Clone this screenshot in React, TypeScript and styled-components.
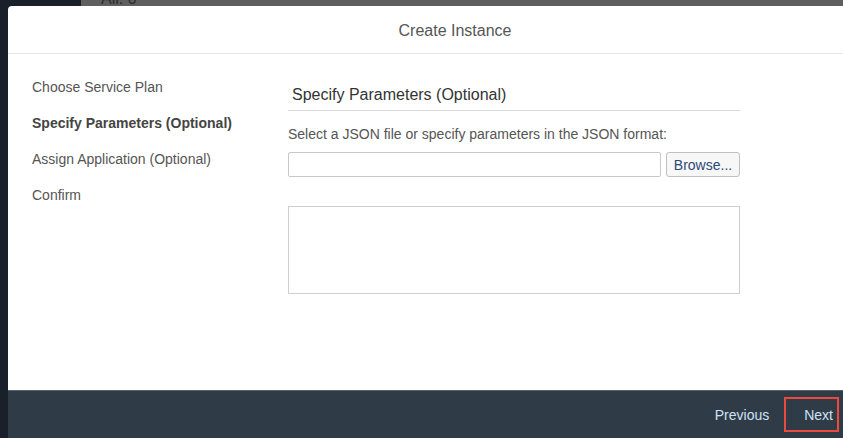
import styled, { createGlobalStyle } from 'styled-components';

const GlobalStyle = createGlobalStyle`
    html, body {
        margin: 0;
        padding: 0;
        overflow: hidden;
    }
    body {
        font-family: 'Liberation Sans', Arial, sans-serif;
    }
`;

const Page = styled.div`
    position: relative;
    width: 843px;
    height: 438px;
    overflow: hidden;
    display: flex;
    background: #5f5f5f;
`;
const SideStrip = styled.div`
    width: 81px;
    flex-shrink: 0;
    background: #1a2029;
`;
const Backdrop = styled.div`
    flex: 1;
    padding-left: 20px;
`;
const Count = styled.div`
    margin-top: -9px;
    font-size: 16px;
    line-height: 16px;
    color: #2b2b2b;
`;

const Dialog = styled.div`
    position: absolute;
    top: 6px;
    left: 8px;
    width: 894px;
    bottom: 0;
    background: #fff;
    border-radius: 4px 4px 0 0;
    display: flex;
    flex-direction: column;
`;
const Header = styled.div`
    height: 48px;
    box-sizing: border-box;
    padding-top: 3px;
    border-bottom: 1px solid #e5e5e5;
    display: flex;
    align-items: center;
    justify-content: center;
    font-size: 16px;
    color: #555;
`;
const Body = styled.div`
    flex: 1;
    display: flex;
    padding: 25px 0 0 24px;
`;
const Steps = styled.ul`
    list-style: none;
    margin: 0;
    padding: 0;
    width: 256px;
    display: flex;
    flex-direction: column;
    gap: 20px;
`;
const Step = styled.li<{ $active?: boolean }>`
    font-size: 14px;
    line-height: 16px;
    color: ${(p) => (p.$active ? '#444' : '#555')};
    font-weight: ${(p) => (p.$active ? 'bold' : 'normal')};
`;
const Panel = styled.div`
    width: 452px;
    display: flex;
    flex-direction: column;
`;
const PanelTitle = styled.h3`
    margin: 0;
    padding: 6px 4px 5px;
    font-size: 16px;
    line-height: 20px;
    font-weight: normal;
    color: #333;
    border-bottom: 1px solid #d9d9d9;
`;
const Label = styled.label`
    margin-top: 15px;
    font-size: 14px;
    line-height: 16px;
    color: #555;
`;
const FileRow = styled.div`
    display: flex;
    gap: 5px;
    margin-top: 10px;
`;
const FileInput = styled.input`
    flex: 1;
    height: 25px;
    box-sizing: border-box;
    border: 1px solid #c8c8c8;
    border-radius: 2px;
    font-family: inherit;
`;
const BrowseBtn = styled.button`
    width: 74px;
    height: 25px;
    box-sizing: border-box;
    border: 1px solid #c0c0c0;
    border-radius: 3px;
    background: #f7f7f7;
    color: #2b4a78;
    font-family: inherit;
    font-size: 14px;
    padding: 0;
`;
const JsonArea = styled.textarea`
    margin-top: 29px;
    height: 88px;
    box-sizing: border-box;
    border: 1px solid #cfcfcf;
    resize: none;
    font-family: inherit;
`;

const Footer = styled.div`
    height: 47px;
    border-top: 1px solid #55626f;
    background: #2f3b47;
    display: flex;
    align-items: center;
    justify-content: flex-end;
    padding-right: 63px;
    gap: 9px;
`;
const NavBtn = styled.button<{ $marked?: boolean }>`
    background: none;
    border: 2px solid ${(p) => (p.$marked ? '#ec4a3f' : 'transparent')};
    color: #cfe2f5;
    font-family: inherit;
    font-size: 14px;
    line-height: 16px;
    padding: 8px 4px 8px 18px;
    height: 35px;
    box-sizing: border-box;
`;

export default function App() {
    return (
        <>
            <GlobalStyle />
            <Page>
                <SideStrip />
                <Backdrop>
                    <Count>All: 0</Count>
                </Backdrop>
                <Dialog>
                    <Header>Create Instance</Header>
                    <Body>
                        <Steps>
                            <Step>Choose Service Plan</Step>
                            <Step $active>Specify Parameters (Optional)</Step>
                            <Step>Assign Application (Optional)</Step>
                            <Step>Confirm</Step>
                        </Steps>
                        <Panel>
                            <PanelTitle>Specify Parameters (Optional)</PanelTitle>
                            <Label>Select a JSON file or specify parameters in the JSON format:</Label>
                            <FileRow>
                                <FileInput type="text" />
                                <BrowseBtn>Browse...</BrowseBtn>
                            </FileRow>
                            <JsonArea />
                        </Panel>
                    </Body>
                    <Footer>
                        <NavBtn>Previous</NavBtn>
                        <NavBtn $marked>Next</NavBtn>
                    </Footer>
                </Dialog>
            </Page>
        </>
    );
}
